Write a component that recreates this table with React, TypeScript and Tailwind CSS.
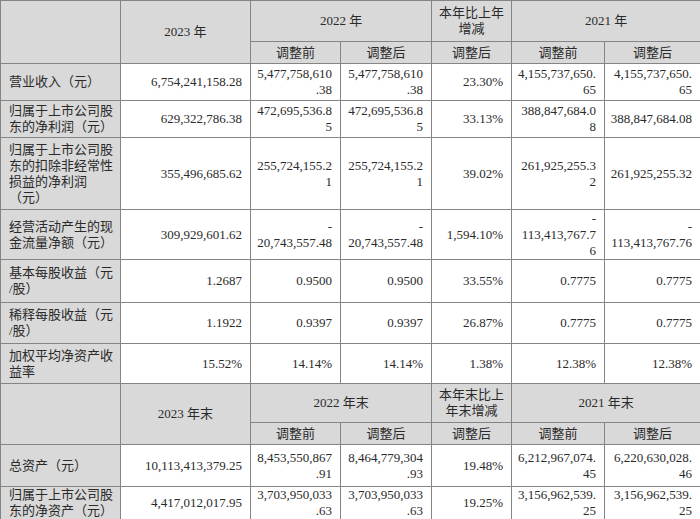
import React from 'react';

type Row = { label: string[]; cells: string[][]; h: string };

const top: Row[] = [
  {
    label: ['营业收入（元）'],
    cells: [['6,754,241,158.28'], ['5,477,758,610', '.38'], ['5,477,758,610', '.38'], ['23.30%'], ['4,155,737,650.', '65'], ['4,155,737,650.', '65']],
    h: 'h-[37px]',
  },
  {
    label: ['归属于上市公司股', '东的净利润（元）'],
    cells: [['629,322,786.38'], ['472,695,536.8', '5'], ['472,695,536.8', '5'], ['33.13%'], ['388,847,684.0', '8'], ['388,847,684.08']],
    h: 'h-[37px]',
  },
  {
    label: ['归属于上市公司股', '东的扣除非经常性', '损益的净利润', '（元）'],
    cells: [['355,496,685.62'], ['255,724,155.2', '1'], ['255,724,155.2', '1'], ['39.02%'], ['261,925,255.3', '2'], ['261,925,255.32']],
    h: 'h-[72px]',
  },
  {
    label: ['经营活动产生的现', '金流量净额（元）'],
    cells: [['309,929,601.62'], ['-', '20,743,557.48'], ['-', '20,743,557.48'], ['1,594.10%'], ['-', '113,413,767.7', '6'], ['-', '113,413,767.76']],
    h: 'h-[50px]',
  },
  {
    label: ['基本每股收益（元', '/股）'],
    cells: [['1.2687'], ['0.9500'], ['0.9500'], ['33.55%'], ['0.7775'], ['0.7775']],
    h: 'h-[43px]',
  },
  {
    label: ['稀释每股收益（元', '/股）'],
    cells: [['1.1922'], ['0.9397'], ['0.9397'], ['26.87%'], ['0.7775'], ['0.7775']],
    h: 'h-[41px]',
  },
  {
    label: ['加权平均净资产收', '益率'],
    cells: [['15.52%'], ['14.14%'], ['14.14%'], ['1.38%'], ['12.38%'], ['12.38%']],
    h: 'h-[40px]',
  },
];

const bottom: Row[] = [
  {
    label: ['总资产（元）'],
    cells: [['10,113,413,379.25'], ['8,453,550,867', '.91'], ['8,464,779,304', '.93'], ['19.48%'], ['6,212,967,074.', '45'], ['6,220,630,028.', '46']],
    h: 'h-[42px]',
  },
  {
    label: ['归属于上市公司股', '东的净资产（元）'],
    cells: [['4,417,012,017.95'], ['3,703,950,033', '.63'], ['3,703,950,033', '.63'], ['19.25%'], ['3,156,962,539.', '25'], ['3,156,962,539.', '25']],
    h: 'h-[33px]',
  },
];

const cell = 'border border-[#858585] p-0 align-middle';
const head = `${cell} bg-[#d9d9d9] text-center`;

const Lines = ({ lines }: { lines: string[] }) => (
  <>
    {lines.map((l, i) => (
      <div key={i}>{l}</div>
    ))}
  </>
);

const Header = ({ end }: { end: boolean }) => {
  const s = end ? '年末' : '年';
  return (
    <>
      <tr className={end ? 'h-[39px]' : 'h-[41px]'}>
        <td rowSpan={2} className={head}></td>
        <td rowSpan={2} className={head}>2023 {s}</td>
        <td colSpan={2} className={head}>2022 {s}</td>
        <td className={head}>
          {end ? <Lines lines={['本年末比上', '年末增减']} /> : <Lines lines={['本年比上年', '增减']} />}
        </td>
        <td colSpan={2} className={head}>2021 {s}</td>
      </tr>
      <tr className="h-[22px]">
        <td className={head}>调整前</td>
        <td className={head}>调整后</td>
        <td className={head}>调整后</td>
        <td className={head}>调整前</td>
        <td className={head}>调整后</td>
      </tr>
    </>
  );
};

const Body = ({ rows }: { rows: Row[] }) => (
  <>
    {rows.map((r, i) => (
      <tr key={i} className={r.h}>
        <td className={`${cell} bg-[#d9d9d9] px-2 text-left`}>
          <Lines lines={r.label} />
        </td>
        {r.cells.map((c, j) => (
          <td key={j} className={`${cell} bg-white pr-2 text-right`}>
            <Lines lines={c} />
          </td>
        ))}
      </tr>
    ))}
  </>
);

const App = () => {
  return (
    <div className="w-[700px] h-[519px] overflow-hidden bg-white">
      <table
        className="w-[700px] table-fixed border-collapse text-[13px] leading-[16px] text-[#2a2a2a] whitespace-nowrap"
        style={{ fontFamily: '"Liberation Serif", "Noto Sans CJK SC", serif' }}
      >
        <colgroup>
          <col className="w-[120px]" />
          <col className="w-[130px]" />
          <col className="w-[90px]" />
          <col className="w-[91px]" />
          <col className="w-[80px]" />
          <col className="w-[93px]" />
          <col className="w-[96px]" />
        </colgroup>
        <tbody>
          <Header end={false} />
          <Body rows={top} />
          <Header end={true} />
          <Body rows={bottom} />
        </tbody>
      </table>
    </div>
  );
};

export default App;
